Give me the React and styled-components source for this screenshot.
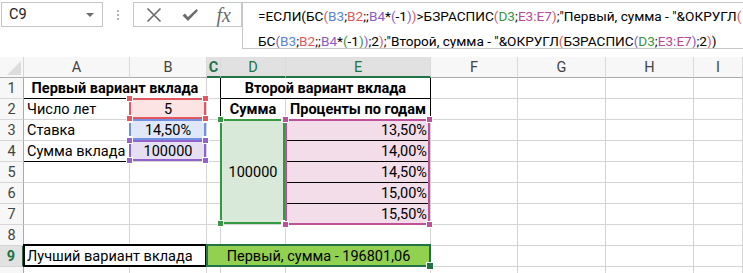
import React from 'react';
import styled, { createGlobalStyle, css } from 'styled-components';

const Global = createGlobalStyle`
  html, body { margin: 0; padding: 0; background: #fff; }
  body { font-family: Roboto, "Liberation Sans", sans-serif; overflow: hidden; }
`;

const Page = styled.div`
  width: 743px;
  height: 273px;
  overflow: hidden;
  background: #fff;
`;

/* ---------- formula bar ---------- */
const FormulaBar = styled.div`
  display: flex;
  align-items: flex-start;
  height: 57px;
  padding-top: 2px;
  box-sizing: border-box;
`;

const NameBox = styled.div`
  box-sizing: border-box;
  width: 102px;
  height: 25px;
  margin-left: 1px;
  border: 1px solid #c6c6c6;
  display: flex;
  align-items: center;
  justify-content: space-between;
  padding: 0 8px 0 7px;
  font-size: 14.5px;
  color: #222;
`;

const Caret = styled.span`
  width: 0;
  height: 0;
  border-left: 4px solid transparent;
  border-right: 4px solid transparent;
  border-top: 4px solid #6d6d6d;
`;

const Grip = styled.div`
  width: 30px;
  height: 25px;
  display: flex;
  flex-direction: column;
  align-items: center;
  justify-content: center;
  gap: 2px;
`;

const Dot = styled.span`
  width: 2px;
  height: 2px;
  background: #b4b4b4;
`;

const ButtonsBox = styled.div`
  box-sizing: border-box;
  width: 109px;
  height: 25px;
  border: 1px solid #c6c6c6;
  display: flex;
  align-items: center;
  justify-content: space-between;
  padding: 0 10px 0 11px;
`;

const Fx = styled.span`
  font-family: "Liberation Serif", "DejaVu Serif", serif;
  font-style: italic;
  font-size: 20px;
  color: #6d6d6d;
  line-height: 1;
`;

const FormulaBox = styled.div`
  flex: 1;
  box-sizing: border-box;
  height: 47px;
  border: 1px solid #c6c6c6;
  border-right: none;
  padding: 1px 0 0 15px;
  font-size: 13.6px;
  line-height: 25px;
  overflow: hidden;
  white-space: nowrap;
  color: #000;
`;

const FLine = styled.div``;

const REF = {
  blue: '#5b82d8',
  red: '#e0575d',
  purple: '#8d5bc6',
  green: '#3a963d',
  pink: '#b8489a',
};

const Tok = styled.span`
  color: ${(p) => (p.$c ? REF[p.$c] : '#000')};
`;

/* ---------- sheet ---------- */
const Sheet = styled.div`
  display: grid;
  grid-template-columns: 24px 106px 77px 14px 65px 145px 87px 88px 88px 1fr;
  grid-auto-rows: 21px;
  font-size: 14.5px;
`;

const Corner = styled.div`
  box-sizing: border-box;
  background: #f7f7f7;
  border-right: 1px solid #d6d6d6;
  border-bottom: 1px solid #ababab;
  display: flex;
  align-items: flex-end;
  justify-content: flex-end;
  padding: 0 2px 2px 0;
`;

const CornerTri = styled.span`
  width: 0;
  height: 0;
  border-left: 14px solid transparent;
  border-bottom: 14px solid #dcdcdc;
`;

const ColHead = styled.div`
  box-sizing: border-box;
  background: ${(p) => (p.$sel ? '#e1e1e1' : '#f7f7f7')};
  border-right: 1px solid #dadada;
  border-bottom: ${(p) => (p.$sel ? '2px solid #217346' : '1px solid #ababab')};
  display: flex;
  align-items: center;
  justify-content: center;
  color: ${(p) => (p.$sel ? '#217346' : '#444')};
  font-weight: ${(p) => (p.$active ? 700 : 400)};
  padding-top: ${(p) => (p.$sel ? '1px' : '0')};
`;

const RowHead = styled.div`
  box-sizing: border-box;
  background: ${(p) => (p.$sel ? '#e1e1e1' : '#f7f7f7')};
  border-right: ${(p) => (p.$sel ? '2px solid #217346' : '1px solid #ababab')};
  border-bottom: 1px solid #d6d6d6;
  display: flex;
  align-items: center;
  justify-content: center;
  color: ${(p) => (p.$sel ? '#217346' : '#444')};
  font-weight: ${(p) => (p.$sel ? 700 : 400)};
`;

const Cell = styled.div`
  position: relative;
  box-sizing: border-box;
  grid-column: span ${(p) => p.$span || 1};
  grid-row: span ${(p) => p.$rows || 1};
  background: ${(p) => p.$bg || '#fff'};
  border-right: 1px solid ${(p) => p.$br || '#d4d4d4'};
  border-bottom: 1px solid ${(p) => p.$bb || '#d4d4d4'};
  display: flex;
  align-items: center;
  justify-content: ${(p) =>
    p.$align === 'center' ? 'center' : p.$align === 'right' ? 'flex-end' : 'flex-start'};
  padding: 0 3px;
  font-weight: ${(p) => (p.$bold ? 700 : 400)};
  color: #000;
  white-space: nowrap;
`;

const PctList = styled.div`
  position: relative;
  grid-row: span 5;
  display: flex;
  flex-direction: column;
  background: #f2dde8;
  border-right: 1px solid #d4d4d4;
`;

const PctRow = styled.div`
  box-sizing: border-box;
  height: 21px;
  display: flex;
  align-items: center;
  justify-content: flex-end;
  padding: 0 3px;
  border-bottom: 1px solid ${(p) => (p.$last ? '#d4d4d4' : '#000')};
`;

const RangeBox = styled.div`
  position: absolute;
  top: -1px;
  left: -1px;
  right: 0;
  bottom: 0;
  border: 2px solid ${(p) => p.$c};
  pointer-events: none;
  z-index: ${(p) => p.$z || 2};
`;

const Handle = styled.span`
  position: absolute;
  width: 5px;
  height: 5px;
  background: ${(p) => p.$c};
  border: 1px solid #fff;
  ${(p) => (p.$v === 't' ? css`top: -5px;` : css`bottom: -5px;`)}
  ${(p) => (p.$h === 'l' ? css`left: -5px;` : css`right: -5px;`)}
`;

const Frame = styled.div`
  position: absolute;
  top: -2px;
  left: -1px;
  right: -1px;
  bottom: -1px;
  border: 2px solid #000;
  pointer-events: none;
  z-index: 2;
`;

const Selection = styled.div`
  position: absolute;
  top: -2px;
  left: -1px;
  right: -1px;
  bottom: -1px;
  border: 2px solid #217346;
  pointer-events: none;
  z-index: 3;
`;

const SelHandle = styled.span`
  position: absolute;
  right: -5px;
  bottom: -5px;
  width: 6px;
  height: 6px;
  background: #217346;
  border: 1px solid #fff;
`;

function Range({ c, z, corners = ['tl', 'tr', 'bl', 'br'] }) {
  return (
    <RangeBox $c={c} $z={z}>
      {corners.map((k) => (
        <Handle key={k} $c={c} $v={k[0]} $h={k[1]} />
      ))}
    </RangeBox>
  );
}

const COLS = ['A', 'B', 'C', 'D', 'E', 'F', 'G', 'H', 'I'];
const SEL = ['C', 'D', 'E'];

function Empties({ n }) {
  return Array.from({ length: n }, (_, i) => <Cell key={i} />);
}

function XIcon() {
  return (
    <svg width="18" height="18" viewBox="0 0 18 18">
      <path d="M2.5 2.5 L15.5 15.5 M15.5 2.5 L2.5 15.5" stroke="#6d6d6d" strokeWidth="1.7" fill="none" />
    </svg>
  );
}

function CheckIcon() {
  return (
    <svg width="18" height="16" viewBox="0 0 18 16">
      <path d="M1.5 8.5 L4 6.5 L7 10 L15.5 2 L17 3.8 L7 14 Z" fill="#6d6d6d" />
    </svg>
  );
}

export default function App() {
  return (
    <Page>
      <Global />
      <FormulaBar>
        <NameBox>
          C9
          <Caret />
        </NameBox>
        <Grip>
          <Dot />
          <Dot />
          <Dot />
        </Grip>
        <ButtonsBox>
          <XIcon />
          <CheckIcon />
          <Fx>fx</Fx>
        </ButtonsBox>
        <FormulaBox>
          <FLine>
            <Tok>=ЕСЛИ(БС</Tok>
            <Tok $c="red">(</Tok>
            <Tok $c="blue">B3</Tok>
            <Tok>;</Tok>
            <Tok $c="red">B2</Tok>
            <Tok>;;</Tok>
            <Tok $c="purple">B4</Tok>
            <Tok>*</Tok>
            <Tok $c="purple">(</Tok>
            <Tok>-1</Tok>
            <Tok $c="purple">)</Tok>
            <Tok $c="red">)</Tok>
            <Tok>&gt;БЗРАСПИС</Tok>
            <Tok $c="red">(</Tok>
            <Tok $c="green">D3</Tok>
            <Tok>;</Tok>
            <Tok $c="pink">E3:E7</Tok>
            <Tok $c="red">)</Tok>
            <Tok>;"Первый, сумма - "&amp;ОКРУГЛ</Tok>
            <Tok $c="red">(</Tok>
          </FLine>
          <FLine>
            <Tok>БС</Tok>
            <Tok $c="purple">(</Tok>
            <Tok $c="blue">B3</Tok>
            <Tok>;</Tok>
            <Tok $c="red">B2</Tok>
            <Tok>;;</Tok>
            <Tok $c="purple">B4</Tok>
            <Tok>*</Tok>
            <Tok $c="green">(</Tok>
            <Tok>-1</Tok>
            <Tok $c="green">)</Tok>
            <Tok $c="purple">)</Tok>
            <Tok>;2</Tok>
            <Tok $c="red">)</Tok>
            <Tok>;"Второй, сумма - "&amp;ОКРУГЛ</Tok>
            <Tok $c="red">(</Tok>
            <Tok>БЗРАСПИС</Tok>
            <Tok $c="purple">(</Tok>
            <Tok $c="green">D3</Tok>
            <Tok>;</Tok>
            <Tok $c="pink">E3:E7</Tok>
            <Tok $c="purple">)</Tok>
            <Tok>;2</Tok>
            <Tok $c="red">)</Tok>
            <Tok>)</Tok>
          </FLine>
        </FormulaBox>
      </FormulaBar>

      <Sheet>
        <Corner>
          <CornerTri />
        </Corner>
        {COLS.map((c) => (
          <ColHead key={c} $sel={SEL.includes(c)} $active={c === 'C'}>
            {c}
          </ColHead>
        ))}

        {/* row 1 */}
        <RowHead>1</RowHead>
        <Cell $span={2} $align="center" $bold $bb="#000">
          Первый вариант вклада
        </Cell>
        <Cell $br="#000" />
        <Cell $span={2} $align="center" $bold $bb="#000" $br="#000">
          Второй вариант вклада
        </Cell>
        <Empties n={4} />

        {/* row 2 */}
        <RowHead>2</RowHead>
        <Cell>Число лет</Cell>
        <Cell $align="center" $bg="#fce4e4">
          5
          <Range c="#e3585e" z={4} />
        </Cell>
        <Cell $br="#000" />
        <Cell $align="center" $bold>
          Сумма
        </Cell>
        <Cell $align="center" $bold $br="#000">
          Проценты по годам
        </Cell>
        <Empties n={4} />

        {/* row 3 */}
        <RowHead>3</RowHead>
        <Cell>Ставка</Cell>
        <Cell $align="center" $bg="#dfe7f8">
          14,50%
          <Range c="#6f93e2" z={2} />
        </Cell>
        <Cell />
        <Cell $rows={5} $align="center" $bg="#d8e8d9">
          100000
          <Range c="#36993f" z={2} />
        </Cell>
        <PctList>
          <PctRow>13,50%</PctRow>
          <PctRow>14,00%</PctRow>
          <PctRow>14,50%</PctRow>
          <PctRow>15,00%</PctRow>
          <PctRow $last>15,50%</PctRow>
          <Range c="#bf519c" z={3} />
        </PctList>
        <Empties n={4} />

        {/* row 4 */}
        <RowHead>4</RowHead>
        <Cell $bb="#000">Сумма вклада</Cell>
        <Cell $align="center" $bg="#e6dff1">
          100000
          <Range c="#9263cc" z={3} />
        </Cell>
        <Cell />
        <Empties n={4} />

        {/* rows 5-7 */}
        {[5, 6, 7].map((r) => (
          <React.Fragment key={r}>
            <RowHead>{r}</RowHead>
            <Empties n={7} />
          </React.Fragment>
        ))}

        {/* row 8 */}
        <RowHead>8</RowHead>
        <Empties n={9} />

        {/* row 9 */}
        <RowHead $sel>9</RowHead>
        <Cell $span={2}>
          Лучший вариант вклада
          <Frame />
        </Cell>
        <Cell $span={3} $align="center" $bg="#92d050">
          Первый, сумма - 196801,06
          <Selection>
            <SelHandle />
          </Selection>
        </Cell>
        <Empties n={4} />

        {/* row 10 (only its top edge is in view) */}
        <RowHead />
        <Empties n={9} />
      </Sheet>
    </Page>
  );
}
